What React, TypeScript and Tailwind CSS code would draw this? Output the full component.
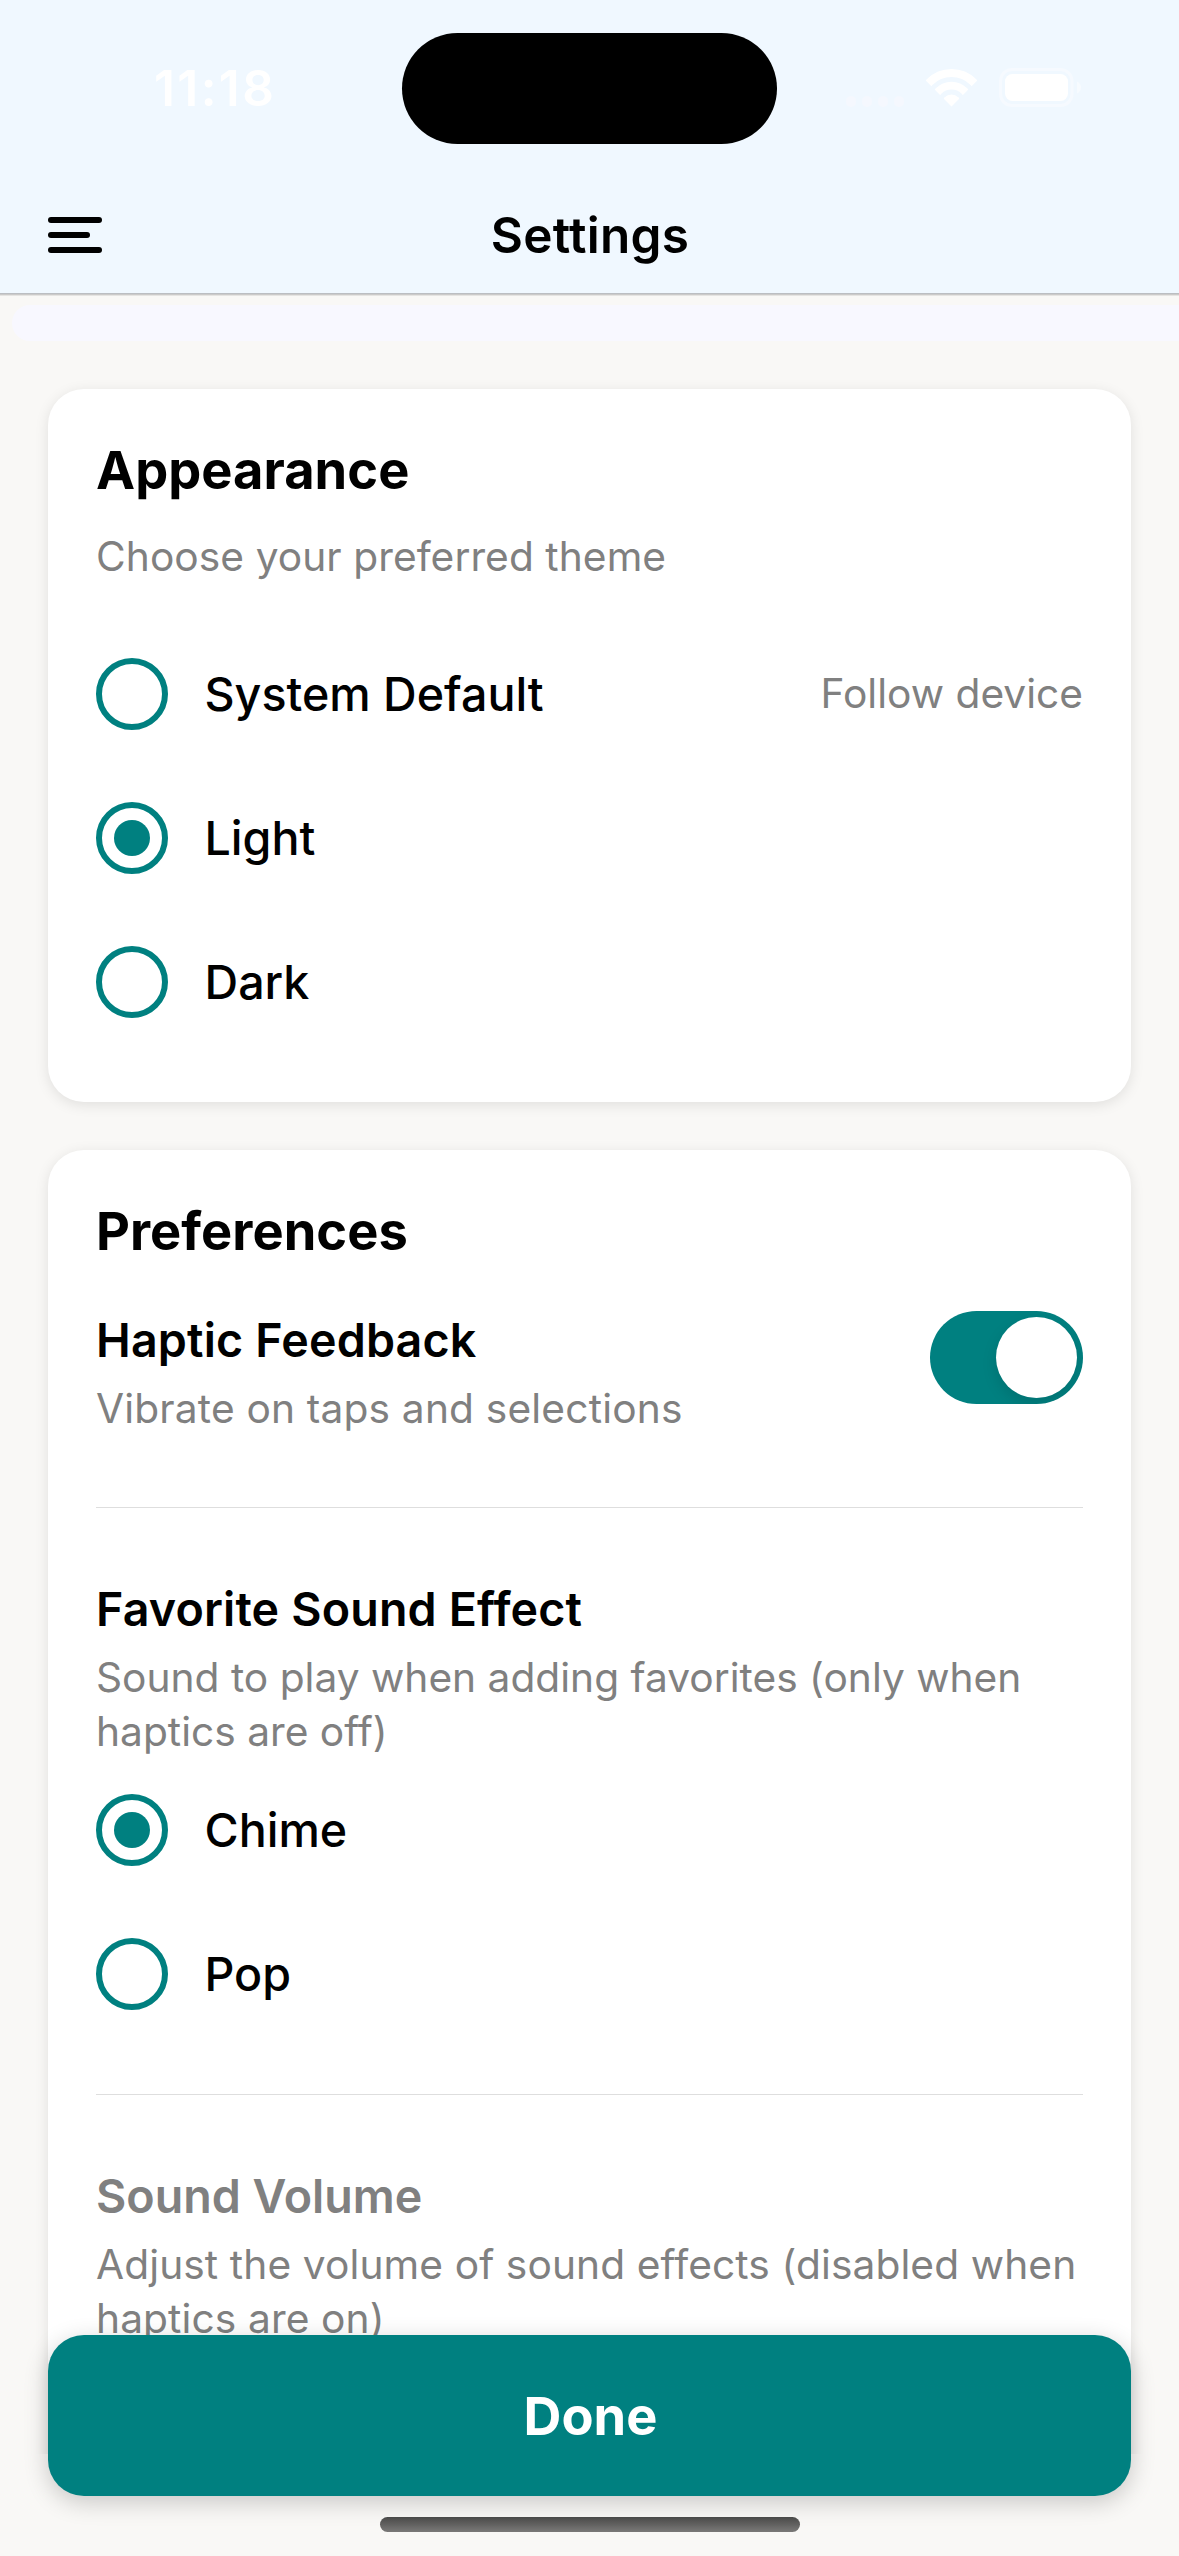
import type { ReactNode } from 'react';

function StatusBar() {
  return (
    <div className="relative flex h-[177px] items-start justify-between pl-[154px] pr-[98px] text-white">
      <div className="mt-[55px] text-[49.5px] font-semibold leading-[66px] tracking-[2.4px]">11:18</div>
      <div className="absolute left-[402px] top-[33px] h-[111px] w-[375px] rounded-full bg-black" />
      <div className="mt-[68px] flex h-[39px] items-start">
        <div className="mt-7 flex gap-[5.5px]">
          {[0, 1, 2, 3].map((i) => (
            <span key={i} className="size-[10.5px] rounded-full bg-[#f5f8fe]" />
          ))}
        </div>
        <svg className="ml-[22px] mt-px h-[38px] w-[51px]" viewBox="0 0 51 38" fill="none">
          <defs>
            <clipPath id="wifi-wedge">
              <polygon points="25.5,37.5 -13,-1.5 64,-1.5" />
            </clipPath>
          </defs>
          <g clipPath="url(#wifi-wedge)">
            <circle cx="25.5" cy="35" r="31" stroke="currentColor" strokeWidth="8" />
            <circle cx="25.5" cy="35" r="18.3" stroke="currentColor" strokeWidth="7.8" />
            <circle cx="25.5" cy="35" r="9.6" fill="currentColor" />
          </g>
        </svg>
        <svg className="ml-[22px] h-[39px] w-[82px]" viewBox="0 0 82 39" fill="none">
          <rect x="1.5" y="1.5" width="71.5" height="36" rx="11.5" stroke="#f6faff" strokeWidth="3" />
          <path d="M78 13.5c2.4 1 4 3.400 4 6s-1.600 5-4 6z" fill="#f7fbff" />
          <rect x="6" y="6" width="63" height="27" rx="7.500" fill="currentColor" />
        </svg>
      </div>
    </div>
  );
}

function NavBar() {
  return (
    <div className="relative flex h-[116px] items-start justify-center pl-px pt-[25px]">
      <button className="absolute left-12 top-10 flex flex-col gap-[9px]" aria-label="Open menu">
        <span className="h-1.5 w-[54px] rounded-full bg-black" />
        <span className="h-1.5 w-[42px] rounded-full bg-black" />
        <span className="h-1.5 w-[54px] rounded-full bg-black" />
      </button>
      <h1 className="text-[49.5px] font-semibold leading-[66px] tracking-[0.28px]">Settings</h1>
    </div>
  );
}

function CardTitle({ children }: { children: ReactNode }) {
  return <h2 className="text-[52.4px] font-bold leading-[66px] tracking-[0.04px]">{children}</h2>;
}

function RadioRow({ label, hint, checked = false }: { label: string; hint?: string; checked?: boolean }) {
  return (
    <div className="flex h-36 items-center">
      <span className="flex size-[72px] items-center justify-center rounded-full border-[6px] border-[#008080]">
        {checked && <span className="size-9 rounded-full bg-[#008080]" />}
      </span>
      <span className="ml-[36.5px] flex-1 text-[46.6px] font-medium leading-[58px]">{label}</span>
      {hint && <span className="text-[40.7px] leading-[54px] text-[#808080]">{hint}</span>}
    </div>
  );
}

function SettingText({ title, muted = false, children }: { title: string; muted?: boolean; children: ReactNode }) {
  return (
    <div className="-mb-px">
      <h3
        className={
          muted
            ? 'text-[46.6px] font-semibold leading-[58px] text-[#808080]'
            : 'text-[46.6px] font-semibold leading-[58px] tracking-[0.16px]'
        }
      >
        {title}
      </h3>
      <p className="mt-[13px] text-[40.7px] leading-[54px] text-[#808080]">{children}</p>
    </div>
  );
}

export default function App() {
  return (
    <div className="relative flex h-[2556px] w-[1179px] flex-col overflow-hidden bg-[#f9f8f6] font-[Inter,sans-serif] text-black">
      <header className="relative z-10 h-[293px] shrink-0 bg-[#f0f8ff] shadow-[0_1px_0_#bbbec2,0_2px_0_#cbcac9,0_3px_0_#e5e4e2]">
        <StatusBar />
        <NavBar />
      </header>

      <main className="flex h-[2161px] shrink-0 flex-col overflow-hidden pt-3">
        <div className="ml-3 h-9 shrink-0 rounded-l-[18px] bg-[#f8f8ff]" />

        <section className="mx-12 mt-12 shrink-0 rounded-[36px] bg-white p-12 shadow-[0_3px_14px_rgba(0,0,0,0.1)]">
          <CardTitle>Appearance</CardTitle>
          <p className="mt-[27px] text-[40.7px] leading-[54px] tracking-[0.06px] text-[#808080]">
            Choose your preferred theme
          </p>
          <div className="mt-[38px]">
            <RadioRow label="System Default" hint="Follow device" />
            <RadioRow label="Light" checked />
            <RadioRow label="Dark" />
          </div>
        </section>

        <section className="mx-12 mt-12 h-[1400px] shrink-0 rounded-[36px] bg-white p-12 shadow-[0_3px_14px_rgba(0,0,0,0.1)]">
          <CardTitle>Preferences</CardTitle>
          <div className="mt-[47px] flex items-start justify-between border-b border-[#dedede] pb-[72px]">
            <SettingText title="Haptic Feedback">
              <span className="tracking-[0.17px]">Vibrate on taps and selections</span>
            </SettingText>
            <span className="flex h-[93px] w-[153px] justify-end overflow-hidden rounded-full bg-[#008080] p-1.5">
              <span className="size-[81px] rounded-full bg-white shadow-[0_6px_15px_rgba(0,0,0,0.12)]" />
            </span>
          </div>

          <div className="border-b border-[#dedede] pb-12 pt-[72px]">
            <SettingText title="Favorite Sound Effect">
              Sound to play when adding favorites (only when haptics are off)
            </SettingText>
            <RadioRow label="Chime" checked />
            <RadioRow label="Pop" />
          </div>

          <div className="pt-[72px]">
            <SettingText title="Sound Volume" muted>
              <span className="tracking-[0.1px]">
                Adjust the volume of sound effects (disabled when haptics are on)
              </span>
            </SettingText>
          </div>
        </section>
      </main>

      <div className="absolute bottom-6 left-[380px] h-[15px] w-[420px] rounded-full bg-linear-to-b from-[#4b4b4a] to-[#7a7978]" />

      <button className="absolute bottom-[60px] left-12 right-12 h-[161px] rounded-[36px] bg-[#008080] pl-0.5 text-[52.4px] font-bold leading-[66px] text-white shadow-[0_6px_24px_rgba(0,0,0,0.2)]">
        Done
      </button>
    </div>
  );
}
